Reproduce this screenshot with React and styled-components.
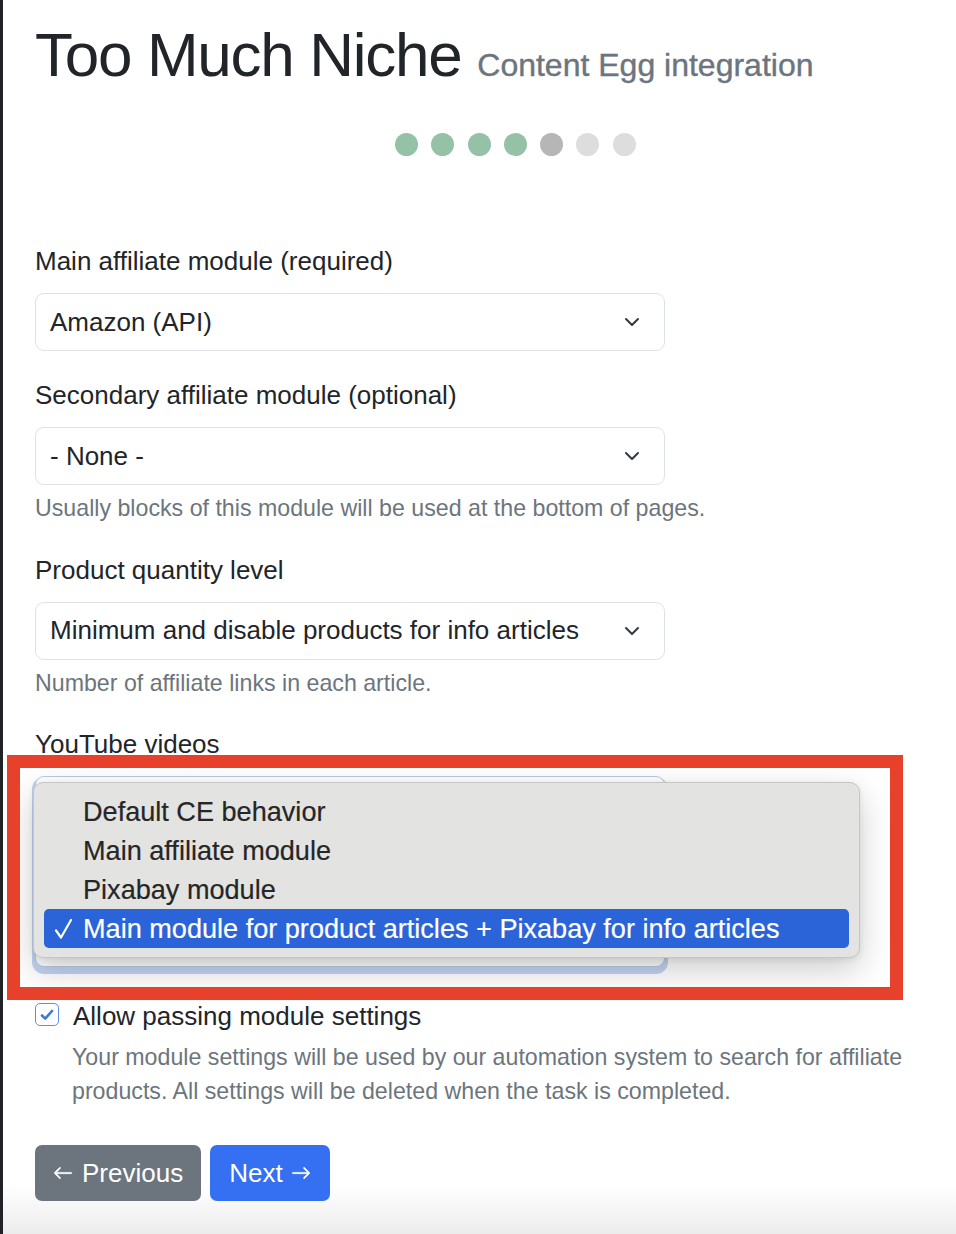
import React from 'react';
import styled, { createGlobalStyle } from 'styled-components';

const GlobalStyle = createGlobalStyle`
  html, body { margin: 0; padding: 0; background: #fff; }
  body { font-family: "Liberation Sans", Arial, sans-serif; color: #212529; }
  *, *::before, *::after { box-sizing: border-box; }
`;

const Page = styled.div`
  min-height: 1234px;
  border-left: 3px solid #1f2226;
  padding: 18px 0 0 32px;
  background: linear-gradient(180deg, #fff 0, #fff 1185px, #ececec 1234px);
  overflow: hidden;
`;

const Title = styled.h1`
  margin: 0;
  font-size: 62px;
  font-weight: 400;
  line-height: 74px;
  letter-spacing: -1.3px;
  color: #212529;
  white-space: nowrap;
`;

const Subtitle = styled.small`
  font-size: 32px;
  letter-spacing: 0;
  color: #6c757d;
  -webkit-text-stroke: 0.4px #6c757d;
`;

const Steps = styled.div`
  display: flex;
  gap: 13.3px;
  margin: 31px 0 0 360px;
`;

const dotColors = { done: '#95c1a7', current: '#b6b6b6', todo: '#dddddd' };

const Dot = styled.span`
  width: 23px;
  height: 23px;
  border-radius: 50%;
  background: ${(p) => dotColors[p.$state]};
`;

const Form = styled.form`
  margin-top: 86px;
`;

const Field = styled.div`
  position: relative;
  margin-bottom: ${(p) => p.$mb ?? 25}px;
`;

const Label = styled.label`
  display: block;
  font-size: 26px;
  line-height: 39px;
  margin-bottom: 12px;
  color: #212529;
`;

const SelectAnchor = styled.div`
  position: relative;
  width: 630px;
`;

const SelectBox = styled.div`
  width: 630px;
  height: ${(p) => p.$height ?? 58}px;
  border: 1px solid ${(p) => (p.$focused ? '#b9c9e4' : '#dee2e6')};
  border-radius: 9px;
  display: flex;
  align-items: center;
  justify-content: space-between;
  padding: 0 24px 0 14px;
  font-size: 26px;
  color: #212529;
  background: #fff;
  box-shadow: ${(p) => (p.$focused ? '0 4px 0 3px rgba(120, 160, 225, 0.45)' : 'none')};
`;

const Help = styled.div`
  margin-top: 6px;
  font-size: 23.2px;
  line-height: 34.5px;
  color: #6c757d;
`;

const Popup = styled.div`
  position: absolute;
  top: 6px;
  left: -2px;
  width: 827px;
  padding: 9px 10px;
  background: #e3e3e2;
  border: 1px solid #c6c6c6;
  border-radius: 10px;
  box-shadow: 0 12px 34px rgba(0, 0, 0, 0.2), 0 2px 6px rgba(0, 0, 0, 0.08);
  z-index: 1;
`;

const MenuItem = styled.div`
  height: 39px;
  display: flex;
  align-items: center;
  padding-left: 10px;
  border-radius: 5px;
  font-size: 27.1px;
  color: ${(p) => (p.$selected ? '#ffffff' : '#262626')};
  background: ${(p) => (p.$selected ? '#2b63d9' : 'transparent')};
  -webkit-text-stroke: 0.2px ${(p) => (p.$selected ? '#ffffff' : '#262626')};
`;

const CheckSlot = styled.span`
  width: 29px;
  display: flex;
  align-items: center;
`;

const Highlight = styled.div`
  position: absolute;
  top: 30px;
  left: -28px;
  width: 896px;
  height: 245px;
  border: 13px solid #e8412b;
  pointer-events: none;
  z-index: 2;
`;

const FormCheck = styled.div`
  display: flex;
  align-items: flex-start;
  gap: 14px;
  font-size: 26px;
  line-height: 39px;
`;

const CheckBox = styled.span`
  margin-top: 6px;
  width: 24px;
  height: 23px;
  border: 1.5px solid #5a8ff0;
  border-radius: 5px;
  background: #fff;
  display: flex;
  align-items: center;
  justify-content: center;
`;

const CheckHelp = styled.div`
  margin-top: 4px;
  padding-left: 37px;
  width: 907px;
  font-size: 23.2px;
  line-height: 34px;
  color: #6c757d;
`;

const Buttons = styled.div`
  display: flex;
  gap: 9px;
  margin-top: 37px;
`;

const Button = styled.button`
  height: 56px;
  padding: 0 ${(p) => (p.$variant === 'primary' ? 19 : 18)}px;
  border: none;
  border-radius: 7px;
  display: inline-flex;
  align-items: center;
  gap: ${(p) => (p.$variant === 'primary' ? 8 : 9)}px;
  font-family: "Liberation Sans", Arial, sans-serif;
  font-size: 26px;
  color: #fff;
  background: ${(p) => (p.$variant === 'primary' ? '#3470f1' : '#6c757d')};
`;

const Chevron = () => (
  <svg width="16" height="16" viewBox="0 0 16 16" fill="none">
    <path d="m2 5 6 6 6-6" stroke="#343a40" strokeWidth="2" strokeLinecap="round" strokeLinejoin="round" />
  </svg>
);

const ArrowLeft = () => (
  <svg width="20" height="20" viewBox="0 0 16 16" fill="#fff" stroke="#fff" strokeWidth="0.5">
    <path fillRule="evenodd" d="M15 8a.5.5 0 0 0-.5-.5H2.707l3.147-3.146a.5.5 0 1 0-.708-.708l-4 4a.5.5 0 0 0 0 .708l4 4a.5.5 0 0 0 .708-.708L2.707 8.5H14.5A.5.5 0 0 0 15 8" />
  </svg>
);

const ArrowRight = () => (
  <svg width="20" height="20" viewBox="0 0 16 16" fill="#fff" stroke="#fff" strokeWidth="0.5">
    <path fillRule="evenodd" d="M1 8a.5.5 0 0 1 .5-.5h11.793l-3.147-3.146a.5.5 0 0 1 .708-.708l4 4a.5.5 0 0 1 0 .708l-4 4a.5.5 0 0 1-.708-.708L13.293 8.5H1.5A.5.5 0 0 1 1 8" />
  </svg>
);

const MenuCheck = () => (
  <svg width="19" height="22" viewBox="0 0 19 22" fill="none">
    <path d="M2 12.5l5 7L17 2" stroke="#fff" strokeWidth="2.2" strokeLinecap="round" strokeLinejoin="round" />
  </svg>
);

const Tick = () => (
  <svg width="16" height="16" viewBox="0 0 16 16" fill="none">
    <path d="M3 8.5l3.2 3.2L13 4" stroke="#3d7bd6" strokeWidth="2.6" strokeLinecap="round" strokeLinejoin="round" />
  </svg>
);

const steps = ['done', 'done', 'done', 'done', 'current', 'todo', 'todo'];

const youtubeOptions = [
  'Default CE behavior',
  'Main affiliate module',
  'Pixabay module',
  'Main module for product articles + Pixabay for info articles',
];

export default function App() {
  return (
    <>
      <GlobalStyle />
      <Page>
        <Title>
          Too Much Niche <Subtitle>Content Egg integration</Subtitle>
        </Title>
        <Steps>
          {steps.map((s, i) => (
            <Dot key={i} $state={s} />
          ))}
        </Steps>
        <Form onSubmit={(e) => e.preventDefault()}>
          <Field>
            <Label>Main affiliate module (required)</Label>
            <SelectBox>
              <span>Amazon (API)</span>
              <Chevron />
            </SelectBox>
          </Field>
          <Field>
            <Label>Secondary affiliate module (optional)</Label>
            <SelectBox>
              <span>- None -</span>
              <Chevron />
            </SelectBox>
            <Help>Usually blocks of this module will be used at the bottom of pages.</Help>
          </Field>
          <Field>
            <Label>Product quantity level</Label>
            <SelectBox>
              <span>Minimum and disable products for info articles</span>
              <Chevron />
            </SelectBox>
            <Help>Number of affiliate links in each article.</Help>
          </Field>
          <Field $mb={30}>
            <Label>YouTube videos</Label>
            <SelectAnchor>
              <SelectBox $height={191} $focused />
              <Popup>
                {youtubeOptions.map((o, i) => {
                  const selected = i === youtubeOptions.length - 1;
                  return (
                    <MenuItem key={o} $selected={selected}>
                      <CheckSlot>{selected ? <MenuCheck /> : null}</CheckSlot>
                      {o}
                    </MenuItem>
                  );
                })}
              </Popup>
            </SelectAnchor>
            <Highlight />
          </Field>
          <FormCheck>
            <CheckBox>
              <Tick />
            </CheckBox>
            <span>Allow passing module settings</span>
          </FormCheck>
          <CheckHelp>
            Your module settings will be used by our automation system to search for affiliate products. All settings will be deleted when the task is completed.
          </CheckHelp>
          <Buttons>
            <Button type="button">
              <ArrowLeft />
              Previous
            </Button>
            <Button type="button" $variant="primary">
              Next
              <ArrowRight />
            </Button>
          </Buttons>
        </Form>
      </Page>
    </>
  );
}
